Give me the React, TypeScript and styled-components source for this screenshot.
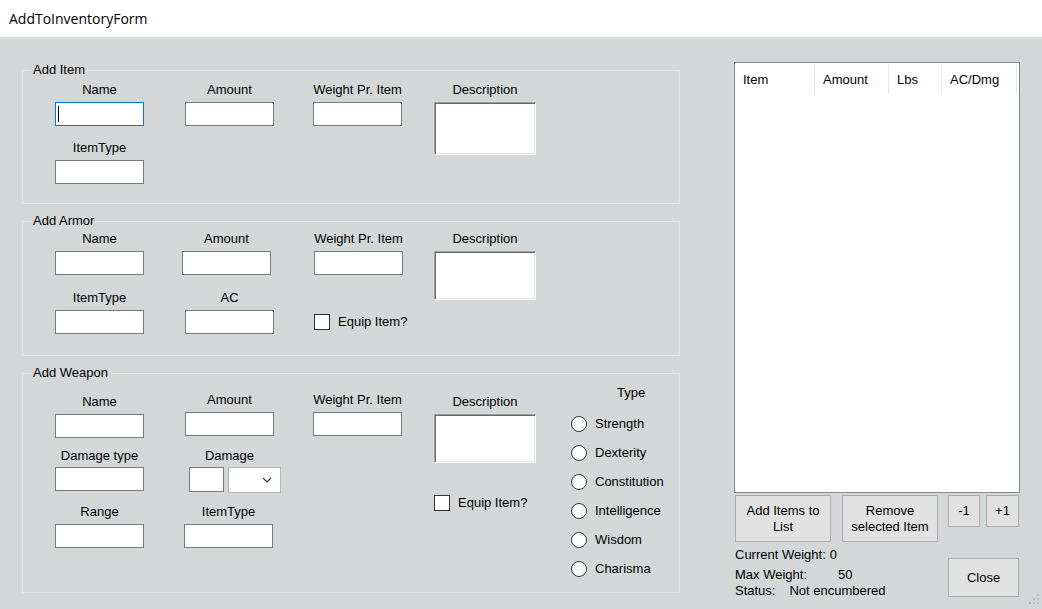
import React from 'react'
import styled, { createGlobalStyle } from 'styled-components'

const GlobalStyle = createGlobalStyle`
  html, body {
    margin: 0;
    padding: 0;
    background: #d4d7d8;
  }
  body {
    font-family: 'Liberation Sans', Arial, sans-serif;
    font-size: 13px;
    color: #000000;
  }
`

const Window = styled.div`
  position: relative;
  width: 1042px;
  height: 609px;
  overflow: hidden;
  display: flex;
  flex-direction: column;
  background: #d4d7d8;
`

const TitleBar = styled.div`
  height: 37px;
  flex-shrink: 0;
  display: flex;
  align-items: center;
  padding-left: 9px;
  background: #ffffff;
  font-family: 'Open Sans', 'Liberation Sans', sans-serif;
  font-size: 14px;
`

const Client = styled.div`
  display: flex;
  align-items: flex-start;
  padding-left: 22px;
`

const LeftColumn = styled.div`
  display: flex;
  flex-direction: column;
  gap: 9px;
  width: 658px;
  margin-top: 25px;
`

const GroupBox = styled.fieldset<{ $pb: number }>`
  margin: 0;
  min-width: 0;
  padding: 0 0 ${(p) => p.$pb}px 0;
  border: 1px solid #e2e4e5;
`

const Legend = styled.legend`
  margin-left: 8px;
  padding: 0 2px;
  line-height: 16px;
`

const FieldGrid = styled.div<{ $pt: number; $rowGap: number }>`
  display: grid;
  grid-template-columns: 130px 128px 121px 102px;
  row-gap: ${(p) => p.$rowGap}px;
  align-items: start;
  padding: ${(p) => p.$pt}px 0 0 32px;
`

const Field = styled.div<{
  $col: number
  $row: number
  $span?: number
  $dx?: number
  $dy?: number
  $w?: number
}>`
  grid-column: ${(p) => p.$col};
  grid-row: ${(p) => p.$row} / span ${(p) => p.$span ?? 1};
  display: flex;
  flex-direction: column;
  align-items: flex-start;
  width: ${(p) => p.$w ?? 89}px;
  margin-left: ${(p) => p.$dx ?? 0}px;
  margin-top: ${(p) => p.$dy ?? 0}px;
`

const Label = styled.div<{ $gap?: number }>`
  align-self: stretch;
  height: 16px;
  line-height: 16px;
  text-align: center;
  white-space: nowrap;
  margin-bottom: ${(p) => p.$gap ?? 4}px;
`

const TextBox = styled.div<{ $w?: number; $focused?: boolean }>`
  box-sizing: border-box;
  width: ${(p) => p.$w ?? 89}px;
  height: 24px;
  display: flex;
  align-items: center;
  background: #ffffff;
  border: 1px solid ${(p) => (p.$focused ? '#0078d7' : '#7a7a7a')};
`

const Caret = styled.span`
  width: 1px;
  height: 16px;
  margin-left: 2px;
  background: #000000;
`

const MultiLineBox = styled.div<{ $h: number }>`
  box-sizing: border-box;
  width: 102px;
  height: ${(p) => p.$h}px;
  background: #ffffff;
  border-top: 1px solid #a0a0a0;
  border-left: 1px solid #a0a0a0;
  border-right: 1px solid #ffffff;
  border-bottom: 1px solid #ffffff;
  box-shadow: inset 1px 1px 0 #696969, inset -1px -1px 0 #e3e3e3;
`

const CheckRow = styled.div<{ $col?: number; $row?: number; $mt?: number; $dx?: number }>`
  grid-column: ${(p) => p.$col ?? 'auto'};
  grid-row: ${(p) => p.$row ?? 'auto'};
  align-self: ${(p) => (p.$row ? 'end' : 'flex-start')};
  display: flex;
  align-items: center;
  gap: 8px;
  height: ${(p) => (p.$row ? 24 : 16)}px;
  margin-top: ${(p) => p.$mt ?? 0}px;
  margin-left: ${(p) => p.$dx ?? 0}px;
  white-space: nowrap;
  line-height: 16px;
`

const CheckBox = styled.span`
  box-sizing: border-box;
  width: 16px;
  height: 16px;
  flex-shrink: 0;
  background: #ffffff;
  border: 1px solid #333333;
`

const Controls = styled.div`
  display: flex;
  gap: 4px;
  margin-left: 4px;
`

const SmallBox = styled.div`
  box-sizing: border-box;
  flex-shrink: 0;
  width: 35px;
  height: 25px;
  background: #ffffff;
  border: 1px solid #7a7a7a;
`

const ComboBox = styled.div`
  box-sizing: border-box;
  flex-shrink: 0;
  width: 53px;
  height: 26px;
  display: flex;
  align-items: center;
  justify-content: flex-end;
  padding-right: 8px;
  background: #ffffff;
  border: 1px solid #b4b4b4;
`

const WeaponBody = styled.div`
  display: flex;
  align-items: flex-start;
`

const RadioColumn = styled.div`
  display: flex;
  flex-direction: column;
  margin-left: 35px;
  padding-top: 4px;
`

const RadioTitle = styled.div`
  height: 16px;
  line-height: 16px;
  padding-left: 46px;
  margin-bottom: 8px;
`

const RadioRow = styled.div`
  display: flex;
  align-items: center;
  gap: 8px;
  height: 29px;
  white-space: nowrap;
`

const RadioDot = styled.span`
  box-sizing: border-box;
  width: 16px;
  height: 16px;
  border-radius: 50%;
  background: #ffffff;
  border: 1px solid #333333;
`

const SidePanel = styled.div`
  display: flex;
  flex-direction: column;
  width: 286px;
  margin: 25px 0 0 54px;
`

const ListView = styled.div`
  box-sizing: border-box;
  height: 431px;
  background: #ffffff;
  border: 1px solid #828790;
`

const HeaderRow = styled.div`
  display: flex;
  padding-top: 2px;
`

const HeaderCell = styled.div<{ $w: number }>`
  box-sizing: border-box;
  width: ${(p) => p.$w}px;
  height: 29px;
  line-height: 29px;
  padding-left: 8px;
  border-right: 1px solid #e5e5e5;
  white-space: nowrap;
`

const ButtonRow = styled.div`
  display: flex;
  align-items: flex-start;
  margin-top: 2px;
  padding-left: 1px;
`

const Button = styled.div<{ $w: number; $h: number; $ml?: number }>`
  box-sizing: border-box;
  width: ${(p) => p.$w}px;
  height: ${(p) => p.$h}px;
  margin-left: ${(p) => p.$ml ?? 0}px;
  display: flex;
  align-items: center;
  justify-content: center;
  text-align: center;
  line-height: 16px;
  background: #e1e1e1;
  border: 1px solid #adadad;
`

const BottomRow = styled.div`
  display: flex;
  align-items: flex-start;
`

const Stats = styled.div`
  display: flex;
  flex-direction: column;
  margin-top: 5px;
  padding-left: 1px;
`

const StatLine = styled.div<{ $mb?: number }>`
  display: flex;
  line-height: 16px;
  white-space: nowrap;
  margin-bottom: ${(p) => p.$mb ?? 0}px;
`

const StatValue = styled.span<{ $ml: number }>`
  margin-left: ${(p) => p.$ml}px;
`

const CloseButton = styled(Button)`
  margin: 16px 1px 0 auto;
`

const Grip = styled.svg`
  position: absolute;
  right: 2px;
  bottom: 2px;
`

const Chevron = () => (
  <svg width="10" height="6" viewBox="0 0 10 6">
    <path d="M1 1 L5 5 L9 1" fill="none" stroke="#333" strokeWidth="1.1" />
  </svg>
)

const radios = ['Strength', 'Dexterity', 'Constitution', 'Intelligence', 'Wisdom', 'Charisma']

export default function App() {
  return (
    <Window>
      <GlobalStyle />
      <TitleBar>AddToInventoryForm</TitleBar>
      <Client>
        <LeftColumn>
          <GroupBox $pb={19}>
            <Legend>Add Item</Legend>
            <FieldGrid $pt={4} $rowGap={14}>
              <Field $col={1} $row={1}>
                <Label>Name</Label>
                <TextBox $focused>
                  <Caret />
                </TextBox>
              </Field>
              <Field $col={2} $row={1}>
                <Label>Amount</Label>
                <TextBox />
              </Field>
              <Field $col={3} $row={1}>
                <Label>Weight Pr. Item</Label>
                <TextBox />
              </Field>
              <Field $col={4} $row={1} $span={2} $w={102}>
                <Label>Description</Label>
                <MultiLineBox $h={53} />
              </Field>
              <Field $col={1} $row={2}>
                <Label>ItemType</Label>
                <TextBox />
              </Field>
            </FieldGrid>
          </GroupBox>

          <GroupBox $pb={21}>
            <Legend>Add Armor</Legend>
            <FieldGrid $pt={2} $rowGap={15}>
              <Field $col={1} $row={1}>
                <Label>Name</Label>
                <TextBox />
              </Field>
              <Field $col={2} $row={1} $dx={-3}>
                <Label>Amount</Label>
                <TextBox />
              </Field>
              <Field $col={3} $row={1} $dx={1}>
                <Label>Weight Pr. Item</Label>
                <TextBox />
              </Field>
              <Field $col={4} $row={1} $span={2} $w={102}>
                <Label>Description</Label>
                <MultiLineBox $h={49} />
              </Field>
              <Field $col={1} $row={2}>
                <Label>ItemType</Label>
                <TextBox />
              </Field>
              <Field $col={2} $row={2}>
                <Label>AC</Label>
                <TextBox />
              </Field>
              <CheckRow $col={3} $row={2} $dx={1}>
                <CheckBox />
                Equip Item?
              </CheckRow>
            </FieldGrid>
          </GroupBox>

          <GroupBox $pb={9}>
            <Legend>Add Weapon</Legend>
            <WeaponBody>
              <FieldGrid $pt={11} $rowGap={10}>
                <Field $col={1} $row={1} $dy={2}>
                  <Label>Name</Label>
                  <TextBox />
                </Field>
                <Field $col={2} $row={1}>
                  <Label>Amount</Label>
                  <TextBox />
                </Field>
                <Field $col={3} $row={1}>
                  <Label>Weight Pr. Item</Label>
                  <TextBox />
                </Field>
                <Field $col={4} $row={1} $span={3} $dy={2} $w={102}>
                  <Label>Description</Label>
                  <MultiLineBox $h={49} />
                  <CheckRow $mt={32}>
                    <CheckBox />
                    Equip Item?
                  </CheckRow>
                </Field>
                <Field $col={1} $row={2}>
                  <Label $gap={3}>Damage type</Label>
                  <TextBox />
                </Field>
                <Field $col={2} $row={2}>
                  <Label $gap={3}>Damage</Label>
                  <Controls>
                    <SmallBox />
                    <ComboBox>
                      <Chevron />
                    </ComboBox>
                  </Controls>
                </Field>
                <Field $col={1} $row={3} $dy={1}>
                  <Label>Range</Label>
                  <TextBox />
                </Field>
                <Field $col={2} $row={3} $dy={1} $dx={-1}>
                  <Label>ItemType</Label>
                  <TextBox />
                </Field>
              </FieldGrid>
              <RadioColumn>
                <RadioTitle>Type</RadioTitle>
                {radios.map((r) => (
                  <RadioRow key={r}>
                    <RadioDot />
                    {r}
                  </RadioRow>
                ))}
              </RadioColumn>
            </WeaponBody>
          </GroupBox>
        </LeftColumn>

        <SidePanel>
          <ListView>
            <HeaderRow>
              <HeaderCell $w={80}>Item</HeaderCell>
              <HeaderCell $w={74}>Amount</HeaderCell>
              <HeaderCell $w={53}>Lbs</HeaderCell>
              <HeaderCell $w={75}>AC/Dmg</HeaderCell>
            </HeaderRow>
          </ListView>
          <ButtonRow>
            <Button $w={96} $h={47}>
              Add Items to
              <br />
              List
            </Button>
            <Button $w={96} $h={47} $ml={11}>
              Remove
              <br />
              selected Item
            </Button>
            <Button $w={32} $h={32} $ml={10}>
              -1
            </Button>
            <Button $w={33} $h={32} $ml={6}>
              +1
            </Button>
          </ButtonRow>
          <BottomRow>
            <Stats>
              <StatLine $mb={4}>
                Current Weight:<StatValue $ml={4}>0</StatValue>
              </StatLine>
              <StatLine>
                Max Weight:<StatValue $ml={31}>50</StatValue>
              </StatLine>
              <StatLine>
                Status:<StatValue $ml={14}>Not encumbered</StatValue>
              </StatLine>
            </Stats>
            <CloseButton $w={71} $h={39}>
              Close
            </CloseButton>
          </BottomRow>
        </SidePanel>
      </Client>
      <Grip width="14" height="14" viewBox="0 0 14 14">
        {[
          [11, 1],
          [7, 5],
          [11, 5],
          [3, 9],
          [7, 9],
          [11, 9],
        ].map(([x, y]) => (
          <rect key={`${x}-${y}`} x={x} y={y} width="2" height="2" fill="#b9bcbd" />
        ))}
      </Grip>
    </Window>
  )
}
